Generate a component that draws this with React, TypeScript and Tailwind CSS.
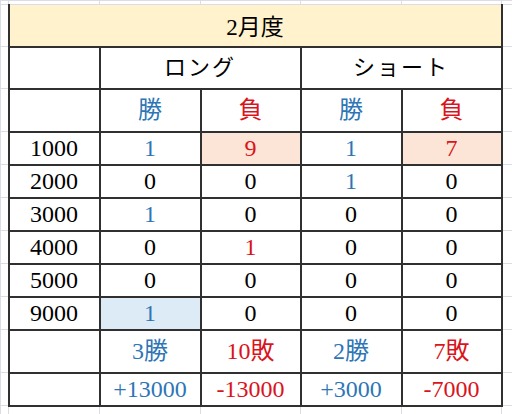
import React from "react";

type Tone = "k" | "b" | "r";
type Cell = { v: string; tone: Tone; fill?: "pink" | "blue" };

const toneClass: Record<Tone, string> = {
  k: "text-black",
  b: "text-[#2e75b6]",
  r: "text-[#d9141c]",
};

const fillClass = {
  pink: "bg-[#fce4d6]",
  blue: "bg-[#ddebf7]",
};

const rows: { label: string; cells: Cell[] }[] = [
  {
    label: "1000",
    cells: [
      { v: "1", tone: "b" },
      { v: "9", tone: "r", fill: "pink" },
      { v: "1", tone: "b" },
      { v: "7", tone: "r", fill: "pink" },
    ],
  },
  {
    label: "2000",
    cells: [
      { v: "0", tone: "k" },
      { v: "0", tone: "k" },
      { v: "1", tone: "b" },
      { v: "0", tone: "k" },
    ],
  },
  {
    label: "3000",
    cells: [
      { v: "1", tone: "b" },
      { v: "0", tone: "k" },
      { v: "0", tone: "k" },
      { v: "0", tone: "k" },
    ],
  },
  {
    label: "4000",
    cells: [
      { v: "0", tone: "k" },
      { v: "1", tone: "r" },
      { v: "0", tone: "k" },
      { v: "0", tone: "k" },
    ],
  },
  {
    label: "5000",
    cells: [
      { v: "0", tone: "k" },
      { v: "0", tone: "k" },
      { v: "0", tone: "k" },
      { v: "0", tone: "k" },
    ],
  },
  {
    label: "9000",
    cells: [
      { v: "1", tone: "b", fill: "blue" },
      { v: "0", tone: "k" },
      { v: "0", tone: "k" },
      { v: "0", tone: "k" },
    ],
  },
];

const summary: Cell[][] = [
  [
    { v: "3勝", tone: "b" },
    { v: "10敗", tone: "r" },
    { v: "2勝", tone: "b" },
    { v: "7敗", tone: "r" },
  ],
  [
    { v: "+13000", tone: "b" },
    { v: "-13000", tone: "r" },
    { v: "+3000", tone: "b" },
    { v: "-7000", tone: "r" },
  ],
];

// spreadsheet grid lines outside the table
const grid = "border border-[#dcdce6] p-0";
const box =
  "border-2 border-[#303030] p-0 text-center align-middle leading-none font-['Liberation_Serif','Noto_Sans_CJK_JP',serif] text-[24px]";

function Gutter() {
  return <td className={grid} />;
}

function DataCell({ cell }: { cell: Cell }) {
  return (
    <td className={`${box} ${toneClass[cell.tone]} ${cell.fill ? fillClass[cell.fill] : "bg-white"}`}>
      {cell.v}
    </td>
  );
}

export default function App() {
  return (
    <div className="w-[512px] h-[414px] overflow-hidden bg-white text-black">
      <table className="table-fixed border-collapse w-[512px] font-['Liberation_Serif','Noto_Sans_CJK_JP',serif] text-[24px]">
        <colgroup>
          <col className="w-[8px]" />
          <col className="w-[91px]" />
          <col className="w-[101px]" />
          <col className="w-[100px]" />
          <col className="w-[101px]" />
          <col className="w-[100px]" />
          <col className="w-[11px]" />
        </colgroup>
        <tbody>
          {/* top gutter */}
          <tr className="h-[4px]">
            {Array.from({ length: 7 }).map((_, i) => (
              <Gutter key={i} />
            ))}
          </tr>

          {/* title */}
          <tr className="h-[42px]">
            <Gutter />
            <td
              colSpan={5}
              className="bg-[#fff2cc] border-x-2 border-b-2 border-x-[#303030] border-b-[#303030] border-t border-t-[#dcdce6] p-0 pt-[4px] text-center leading-none font-['Liberation_Serif','Noto_Sans_CJK_JP',serif] text-[23px]"
            >
              2月度
            </td>
            <Gutter />
          </tr>

          {/* long / short */}
          <tr className="h-[42px]">
            <Gutter />
            <td className={box} />
            <td colSpan={2} className={`${box} !text-[22px] tracking-[2px]`}>
              ロング
            </td>
            <td colSpan={2} className={`${box} !text-[22px] tracking-[2px]`}>
              ショート
            </td>
            <Gutter />
          </tr>

          {/* win / lose */}
          <tr className="h-[43px]">
            <Gutter />
            <td className={box} />
            <td className={`${box} ${toneClass.b}`}>勝</td>
            <td className={`${box} ${toneClass.r}`}>負</td>
            <td className={`${box} ${toneClass.b}`}>勝</td>
            <td className={`${box} ${toneClass.r}`}>負</td>
            <Gutter />
          </tr>

          {rows.map((row) => (
            <tr key={row.label} className="h-[33px]">
              <Gutter />
              <td className={box}>{row.label}</td>
              {row.cells.map((c, i) => (
                <DataCell key={i} cell={c} />
              ))}
              <Gutter />
            </tr>
          ))}

          <tr className="h-[43px]">
            <Gutter />
            <td className={box} />
            {summary[0].map((c, i) => (
              <DataCell key={i} cell={c} />
            ))}
            <Gutter />
          </tr>
          <tr className="h-[33px]">
            <Gutter />
            <td className={box} />
            {summary[1].map((c, i) => (
              <DataCell key={i} cell={c} />
            ))}
            <Gutter />
          </tr>

          {/* bottom gutter */}
          <tr className="h-[10px]">
            {Array.from({ length: 7 }).map((_, i) => (
              <Gutter key={i} />
            ))}
          </tr>
        </tbody>
      </table>
    </div>
  );
}
